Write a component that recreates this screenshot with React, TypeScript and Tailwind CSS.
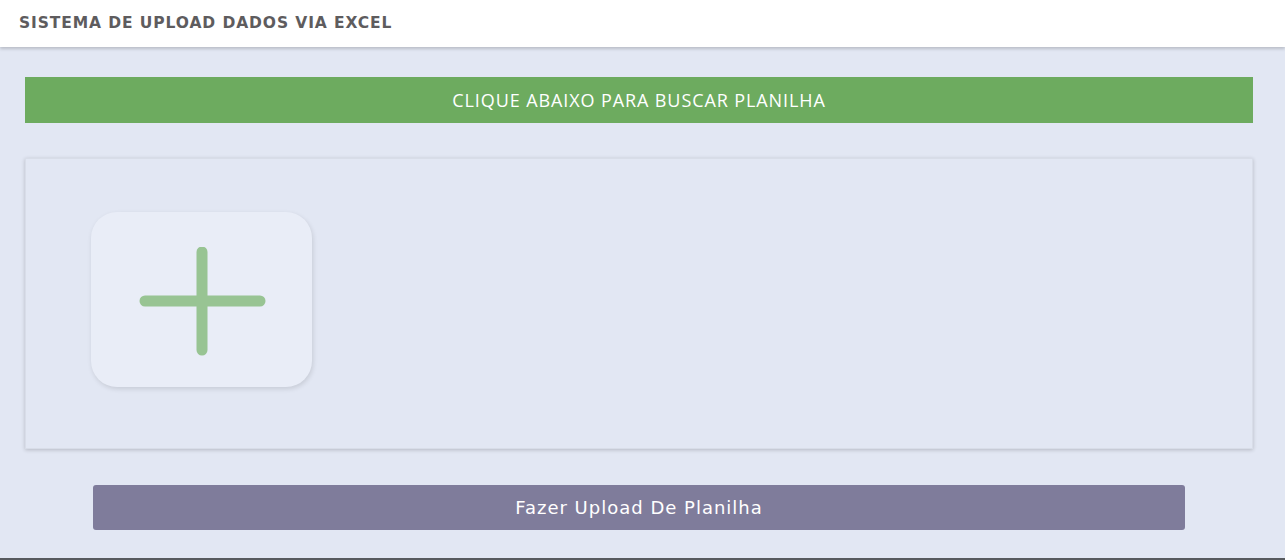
export default function App() {
  return (
    <div className="flex h-[560px] flex-col border-b-2 border-[#575a5e] bg-[#e2e7f3]">
      {/* Header */}
      <header className="flex h-[47px] shrink-0 items-center bg-white pl-[19px] shadow-[0_2px_3px_rgba(0,0,0,0.18)]">
        <h1 className="font-['DejaVu_Sans',sans-serif] text-[15.5px] font-bold tracking-[0.9px] text-[#5e5c5e]">
          SISTEMA DE UPLOAD DADOS VIA EXCEL
        </h1>
      </header>

      <main className="flex flex-col pl-[25px] pr-[32px] pt-[30px]">
        <div className="flex h-[46px] items-center justify-center bg-[#6dab5f] font-['Open_Sans',sans-serif] text-[18px] tracking-[0.9px] text-white">
          CLIQUE ABAIXO PARA BUSCAR PLANILHA
        </div>

        {/* Drop zone */}
        <div className="mt-[35px] h-[291px] border border-[#d8dde8] bg-[#e2e7f3] pl-[65px] pt-[53px] shadow-[0_1px_4px_rgba(0,0,0,0.2)]">
          <button className="grid h-[175px] w-[221px] place-items-center rounded-[26px] bg-[#e9edf7] shadow-[1px_2px_5px_rgba(0,0,0,0.12)]">
            <svg width="128" height="112" viewBox="0 0 128 112" className="ml-[2px] mt-[7px]">
              <g stroke="#98c493" strokeWidth="11" strokeLinecap="round">
                <line x1="6" y1="54" x2="121" y2="54" />
                <line x1="63" y1="5" x2="63" y2="103" />
              </g>
            </svg>
          </button>
        </div>

        <div className="mt-[36px] pl-[68px] pr-[68px]">
          <button className="h-[45px] w-full rounded-[3px] bg-[#7f7c9b] font-['DejaVu_Sans',sans-serif] text-[18px] tracking-[1px] text-white">
            Fazer Upload De Planilha
          </button>
        </div>
      </main>
    </div>
  );
}
